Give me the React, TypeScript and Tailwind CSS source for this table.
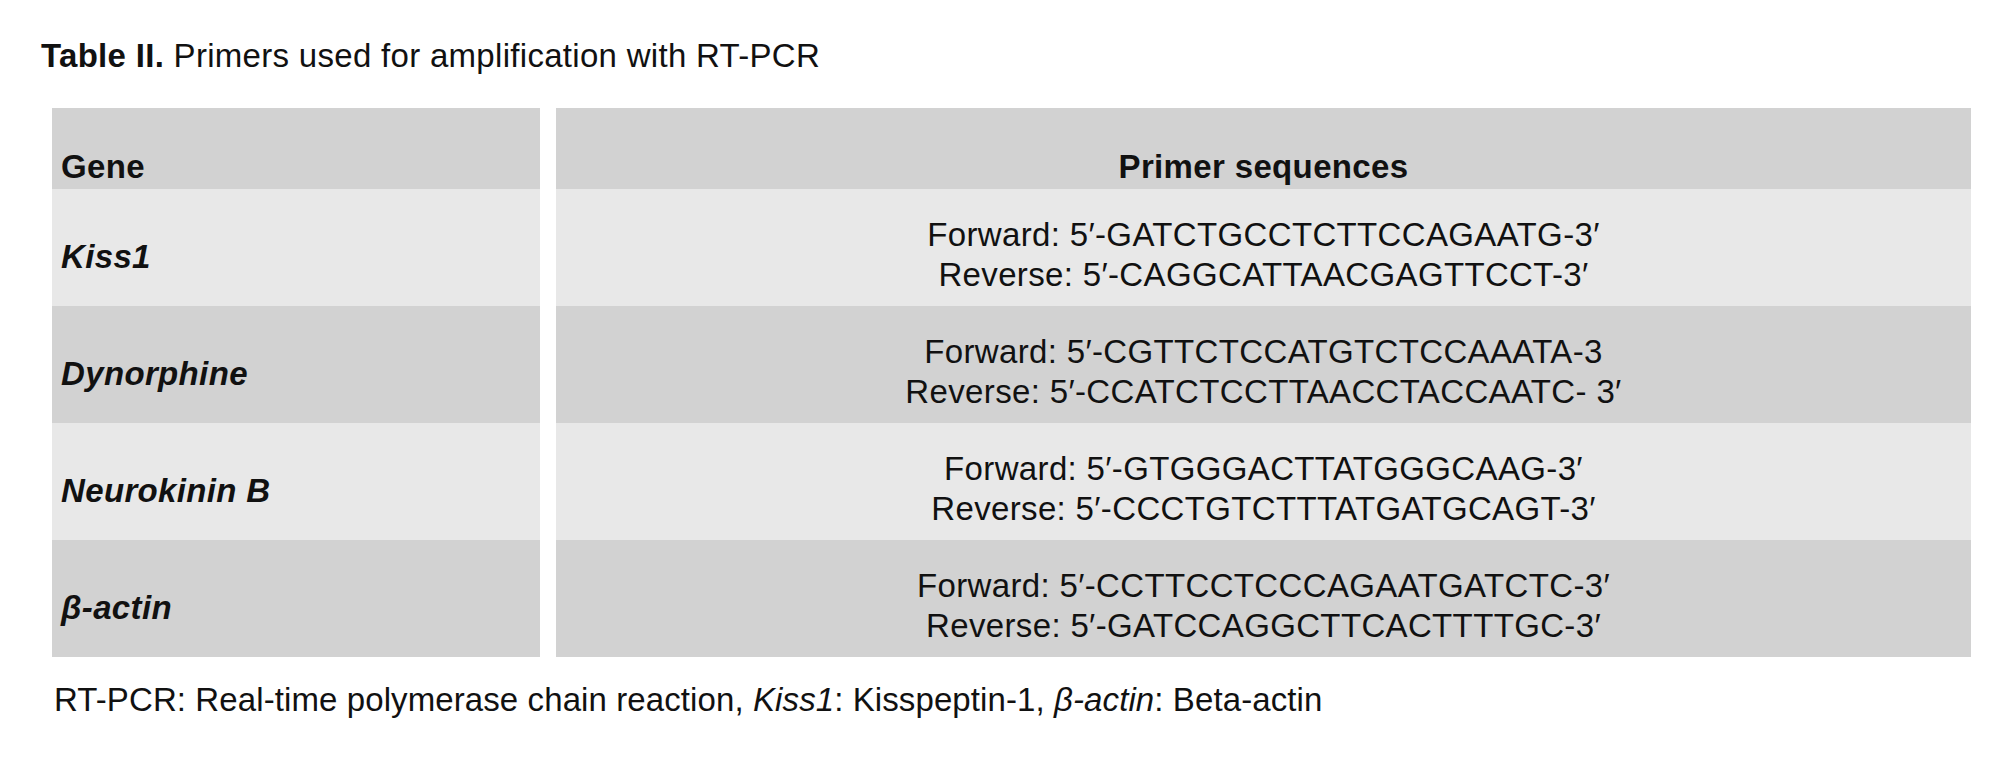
const rows = [
  {
    gene: <>Kiss1</>,
    fwd: "Forward: 5′-GATCTGCCTCTTCCAGAATG-3′",
    rev: "Reverse: 5′-CAGGCATTAACGAGTTCCT-3′",
    bg: "bg-[#e8e8e8]",
  },
  {
    gene: <>Dynorphine</>,
    fwd: "Forward: 5′-CGTTCTCCATGTCTCCAAATA-3",
    rev: "Reverse: 5′-CCATCTCCTTAACCTACCAATC- 3′",
    bg: "bg-[#d2d2d2]",
  },
  {
    gene: <>Neurokinin B</>,
    fwd: "Forward: 5′-GTGGGACTTATGGGCAAG-3′",
    rev: "Reverse: 5′-CCCTGTCTTTATGATGCAGT-3′",
    bg: "bg-[#e8e8e8]",
  },
  {
    gene: <>β-actin</>,
    fwd: "Forward: 5′-CCTTCCTCCCAGAATGATCTC-3′",
    rev: "Reverse: 5′-GATCCAGGCTTCACTTTTGC-3′",
    bg: "bg-[#d2d2d2]",
  },
];

export default function App() {
  return (
    <main className="min-h-screen w-[2000px] bg-white text-[#111] font-['Liberation_Sans',Arial,sans-serif] text-[33px] leading-[40px]">
      <h1 className="pl-[41px] pt-[36px] tracking-[0.3px]">
        <span className="font-bold">Table II.</span> Primers used for
        amplification with RT-PCR
      </h1>

      <div className="ml-[52px] mr-[29px] mt-[32px] grid grid-cols-[488px_1fr] gap-x-[16px] tracking-[0.35px]">
        <div className="flex h-[81px] items-end bg-[#d2d2d2] pb-[2px] pl-[9px] font-bold">
          Gene
        </div>
        <div className="flex h-[81px] items-end justify-center bg-[#d2d2d2] pb-[2px] font-bold">
          Primer sequences
        </div>

        {rows.map((r, i) => (
          <div key={i} className="contents">
            <div
              className={`flex h-[117px] items-center pl-[9px] pt-[18px] font-bold italic ${r.bg}`}
            >
              {r.gene}
            </div>
            <div
              className={`flex h-[117px] flex-col items-center justify-center pt-[14px] text-center ${r.bg}`}
            >
              <span>{r.fwd}</span>
              <span>{r.rev}</span>
            </div>
          </div>
        ))}
      </div>

      <p className="pl-[54px] pt-[23px] tracking-[0.1px]">
        RT-PCR: Real-time polymerase chain reaction, <i>Kiss1</i>:
        Kisspeptin-1, <i>β-actin</i>: Beta-actin
      </p>
    </main>
  );
}
